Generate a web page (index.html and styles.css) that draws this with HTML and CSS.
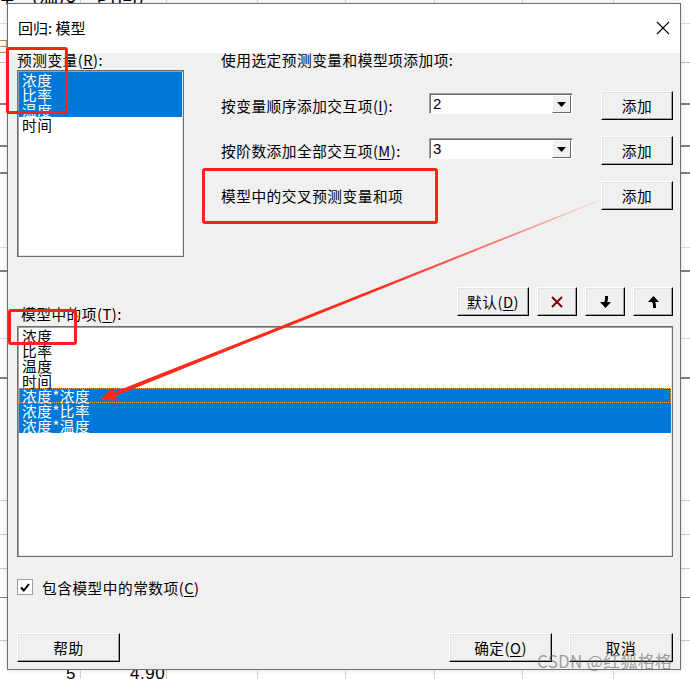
FILE: index.html
```html
<!DOCTYPE html>
<html lang="zh-CN">
<head>
    <meta charset="UTF-8">
    <title>回归: 模型</title>
    <link rel="stylesheet" href="styles.css">
</head>
<body>
    <div class="sheet">
        <span class="sheet-title">择 (温度 时间)</span>
        <span class="sheet-mark">日</span>
        <span class="cell-a">5</span>
        <span class="cell-b">4.90</span>
    </div>

    <div class="dialog">
        <div class="titlebar">
            <span class="title">回归: 模型</span>
            <svg class="close" width="14" height="14" viewBox="0 0 14 14">
                <path d="M1 1L13 13M13 1L1 13" stroke="#000" stroke-width="1.1" fill="none"/>
            </svg>
        </div>

        <div class="content">
            <div class="top">
                <div class="left">
                    <div class="label">预测变量(<u>R</u>):</div>
                    <ul class="listbox predictors">
                        <li class="sel">浓度</li>
                        <li class="sel">比率</li>
                        <li class="sel">温度</li>
                        <li>时间</li>
                    </ul>
                </div>
                <div class="right">
                    <div class="label">使用选定预测变量和模型项添加项:</div>
                    <div class="add-row">
                        <span>按变量顺序添加交互项(<u>I</u>):</span>
                        <div class="combo">
                            <span class="value">2</span>
                            <span class="drop"><svg width="9" height="5" viewBox="0 0 9 5"><path d="M0 0H9L4.5 5Z" fill="#000"/></svg></span>
                        </div>
                        <button class="btn">添加</button>
                    </div>
                    <div class="add-row">
                        <span>按阶数添加全部交互项(<u>M</u>):</span>
                        <div class="combo">
                            <span class="value">3</span>
                            <span class="drop"><svg width="9" height="5" viewBox="0 0 9 5"><path d="M0 0H9L4.5 5Z" fill="#000"/></svg></span>
                        </div>
                        <button class="btn">添加</button>
                    </div>
                    <div class="add-row">
                        <span>模型中的交叉预测变量和项</span>
                        <span></span>
                        <button class="btn">添加</button>
                    </div>
                </div>
            </div>

            <div class="terms-head">
                <div class="label">模型中的项(<u>T</u>):</div>
                <div class="tools">
                    <button class="btn wide">默认(<u>D</u>)</button>
                    <button class="btn icon">
                        <svg width="12" height="12" viewBox="0 0 12 12"><path d="M1 1L11 11M11 1L1 11" stroke="#800000" stroke-width="2"/></svg>
                    </button>
                    <button class="btn icon">
                        <svg width="11" height="12" viewBox="0 0 11 12"><path d="M5 0H8V2Q8 5 7 6H11L5.5 12L0 6H4Q5 5 5 2Z" fill="#000"/></svg>
                    </button>
                    <button class="btn icon">
                        <svg width="11" height="12" viewBox="0 0 11 12"><path d="M5 12H8V10Q8 7 7 6H11L5.5 0L0 6H4Q5 7 5 10Z" fill="#000"/></svg>
                    </button>
                </div>
            </div>

            <ul class="listbox terms">
                <li>浓度</li>
                <li>比率</li>
                <li>温度</li>
                <li>时间</li>
                <li class="sel focus">浓度*浓度</li>
                <li class="sel">浓度*比率</li>
                <li class="sel">浓度*温度</li>
            </ul>

            <div class="check">
                <span class="box">
                    <svg width="10" height="9" viewBox="0 0 10 9"><path d="M1 4.5L3.8 7.5L9 1" stroke="#000" stroke-width="2" fill="none"/></svg>
                </span>
                <span>包含模型中的常数项(<u>C</u>)</span>
            </div>

            <div class="footer">
                <button class="btn big">帮助</button>
                <div class="ok-cancel">
                    <button class="btn big">确定(<u>O</u>)</button>
                    <button class="btn big">取消</button>
                </div>
            </div>
        </div>
    </div>

    <!-- red markup drawn over the screenshot -->
    <div class="mark mark-a"></div>
    <div class="mark mark-b"></div>
    <div class="mark mark-c"></div>
    <svg class="arrow" width="690" height="679" viewBox="0 0 690 679">
        <defs>
            <linearGradient id="fade" gradientUnits="userSpaceOnUse" x1="598" y1="201" x2="100" y2="400">
                <stop offset="0" stop-color="#ff2a1a" stop-opacity="0.1"/>
                <stop offset="0.2" stop-color="#ff2a1a" stop-opacity="0.6"/>
                <stop offset="0.45" stop-color="#ff2a1a" stop-opacity="1"/>
                <stop offset="1" stop-color="#ff2a1a" stop-opacity="1"/>
            </linearGradient>
        </defs>
        <polygon points="597.8,200.4 598.2,201.6 111.8,397.4 110.4,393.6" fill="url(#fade)"/>
        <polygon points="100,400 112.3,387.6 114.9,394.1 117.5,400.6" fill="#ff2a1a"/>
    </svg>

    <div class="watermark">CSDN @红狐格格</div>
</body>
</html>
```

FILE: styles.css
```css
body {
    margin: 0;
    width: 690px;
    height: 679px;
    overflow: hidden;
    position: relative;
    background: #fff;
    font-family: "Noto Sans CJK SC", "Liberation Sans", sans-serif;
    font-size: 14.7px;
    letter-spacing: 0.5px;
    color: #000;
}

/* spreadsheet behind the dialog */
.sheet {
    position: absolute;
    inset: 0;
    background-image:
        linear-gradient(90deg, transparent 80px, #d6d6d6 80px 81px, transparent 81px 166px, #d6d6d6 166px 167px,
            transparent 167px 257px, #d6d6d6 257px 258px, transparent 258px 345px, #d6d6d6 345px 346px,
            transparent 346px 434px, #d6d6d6 434px 435px, transparent 435px 522px, #d6d6d6 522px 523px,
            transparent 523px 613px, #d6d6d6 613px 614px, transparent 614px),
        linear-gradient(180deg, transparent 23px, #dcdcdc 23px 24px, transparent 24px 62px, #bdbdbd 62px 63px,
            transparent 63px 103px, #808080 103px 105px, transparent 105px 145px, #808080 145px 147px,
            transparent 147px 172px, #808080 172px 174px, transparent 174px 247px, #dcdcdc 247px 248px,
            transparent 248px 270px, #808080 270px 272px, transparent 272px 338px, #dcdcdc 338px 339px,
            transparent 339px 377px, #808080 377px 379px, transparent 379px 500px, #c8c8c8 500px 501px,
            transparent 501px 534px, #c8c8c8 534px 535px, transparent 535px 568px, #c8c8c8 568px 569px,
            transparent 569px 597px, #808080 597px 598px, transparent 598px 640px, #c8c8c8 640px 641px,
            transparent 641px);
}

.sheet span {
    position: absolute;
}

.sheet-title {
    top: -20px;
    left: -6px;
    font-size: 20px;
    word-spacing: 12px;
}

.sheet-mark {
    top: 35px;
    left: -5px;
    color: #c08a50;
}

.cell-a,
.cell-b {
    font-family: "Liberation Sans", sans-serif;
    font-size: 17px;
    top: 664px;
}

.cell-a {
    left: 66px;
}

.cell-b {
    left: 130px;
}

/* dialog window */
.dialog {
    position: relative;
    z-index: 1;
    box-sizing: border-box;
    width: 674px;
    height: 667px;
    margin: 3px 0 0 7px;
    border: 1px solid #707070;
    background: #f0f0f0;
    box-shadow: 0 0 6px rgba(0, 0, 0, 0.15);
}

.titlebar {
    height: 49px;
    background: #fff;
    display: flex;
    align-items: center;
    justify-content: space-between;
    padding: 0 10px 0 10px;
}

.title {
    font-size: 15px;
    letter-spacing: 0;
    margin-top: -2px;
}

.close {
    margin-top: -2px;
}

.content {
    padding: 0 7px 0 9px;
}

.label {
    line-height: 14px;
    white-space: nowrap;
}

u {
    text-decoration-thickness: 1px;
    text-underline-offset: 2px;
}

.top {
    display: grid;
    grid-template-columns: 167px 1fr;
    column-gap: 37px;
}

.left .listbox {
    margin-top: 3px;
    height: 187px;
}

.right .label {
    margin-bottom: 24px;
}

.add-row {
    display: grid;
    grid-template-columns: 180px 144px 72px;
    column-gap: 28px;
    align-items: center;
    height: 29px;
    margin-bottom: 16px;
    white-space: nowrap;
}

.combo {
    align-self: start;
    margin-top: 2px;
    box-sizing: border-box;
    height: 21px;
    display: flex;
    align-items: stretch;
    background: #fff;
    border: 1px solid;
    border-color: #a0a0a0 #fff #fff #a0a0a0;
    box-shadow: inset 1px 1px #696969;
    padding: 1px 1px 0 2px;
}

.combo .value {
    flex: 1;
    line-height: 18px;
    font-family: "Liberation Sans", sans-serif;
    font-size: 15px;
    padding-left: 1px;
}

.combo .drop {
    width: 19px;
    box-sizing: border-box;
    background: #f0f0f0;
    border: 1px solid;
    border-color: #fff #696969 #696969 #fff;
    display: flex;
    align-items: center;
    justify-content: center;
}

.btn {
    font: inherit;
    letter-spacing: inherit;
    color: #000;
    box-sizing: border-box;
    height: 29px;
    padding: 0;
    background: #f0f0f0;
    border: 1px solid;
    border-color: #fff #000 #000 #fff;
    box-shadow: inset -1px -1px #a0a0a0, inset 1px 1px #e3e3e3;
    display: flex;
    align-items: center;
    justify-content: center;
    white-space: nowrap;
}

.terms-head {
    display: flex;
    justify-content: space-between;
    align-items: flex-start;
    margin-top: 30px;
}

.terms-head .label {
    padding-top: 20px;
    margin-left: 4px;
}

.tools {
    display: flex;
    gap: 8px;
}

.btn.wide {
    width: 72px;
}

.btn.icon {
    width: 40px;
}

.listbox {
    list-style: none;
    margin: 0;
    padding: 1px;
    box-sizing: border-box;
    background: #fff;
    border: 1px solid #6f6f6f;
    box-shadow: inset 1px 1px #a0a0a0, inset -1px -1px #e3e3e3;
    overflow: hidden;
}

.listbox li {
    height: 15px;
    line-height: 15px;
    padding-left: 3px;
    white-space: nowrap;
    box-sizing: border-box;
}

.listbox li.sel {
    background: #0078d7;
    color: #fff;
}

.listbox li.focus {
    border: 1px dotted #f0a050;
    line-height: 13px;
    padding-left: 2px;
}

.terms {
    margin-top: 5px;
    height: 231px;
}

.check {
    display: flex;
    align-items: center;
    gap: 9px;
    margin-top: 22px;
    height: 16px;
}

.check .box {
    box-sizing: border-box;
    width: 16px;
    height: 16px;
    background: #fff;
    border: 1px solid #a0a0a0;
    display: flex;
    align-items: center;
    justify-content: center;
}

.footer {
    display: flex;
    justify-content: space-between;
    margin-top: 38px;
}

.btn.big {
    width: 103px;
}

.ok-cancel {
    display: flex;
    gap: 17px;
}

.ok-cancel .btn:last-child {
    width: 104px;
}

/* annotations */
.mark {
    position: absolute;
    z-index: 2;
    box-sizing: border-box;
    border: 3px solid #ff2016;
    border-radius: 3px;
}

.mark-a {
    left: 6px;
    top: 47px;
    width: 62px;
    height: 67px;
}

.mark-b {
    left: 202px;
    top: 168px;
    width: 236px;
    height: 56px;
}

.mark-c {
    left: 8px;
    top: 309px;
    width: 69px;
    height: 36px;
}

.arrow {
    position: absolute;
    z-index: 2;
    left: 0;
    top: 0;
    pointer-events: none;
}

.watermark {
    position: absolute;
    z-index: 3;
    left: 537px;
    top: 648px;
    font-size: 17px;
    letter-spacing: 0.3px;
    color: rgba(100, 100, 100, 0.6);
    white-space: nowrap;
}
```
